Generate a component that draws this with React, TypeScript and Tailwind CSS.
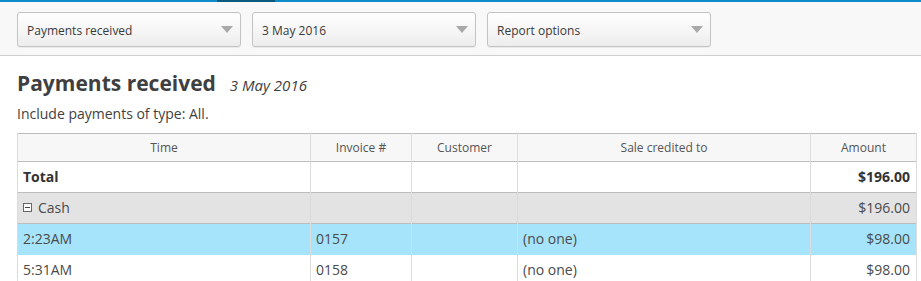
const cols = [
  { label: "Time", w: "w-[293px]" },
  { label: "Invoice #", w: "w-[101px]" },
  { label: "Customer", w: "w-[106px]" },
  { label: "Sale credited to", w: "w-[293px]" },
  { label: "Amount", w: "w-[106px]" },
]

const payments = [
  { time: "2:23AM", invoice: "0157", customer: "", credited: "(no one)", amount: "$98.00", selected: true },
  { time: "5:31AM", invoice: "0158", customer: "", credited: "(no one)", amount: "$98.00", selected: false },
]

function Select({ label }: { label: string }) {
  return (
    <div className="flex h-[35px] w-[224px] items-center justify-between rounded-[3px] border border-[#c4c4c4] bg-gradient-to-b from-white to-[#ededed] pl-[9px] pr-[7px] shadow-[0_1px_1px_rgba(0,0,0,0.06)]">
      <span className="pt-[2px] text-[12px] text-[#3a3a3a]">{label}</span>
      <svg width="12" height="7" viewBox="0 0 12 7">
        <polygon points="0,0 12,0 6,7" fill="#a9a9a9" />
      </svg>
    </div>
  )
}

export default function App() {
  const cell = "h-[31px] border-x border-[#dcdcdc] pl-[5px] pr-[6px] pb-[2px] text-[14px] text-[#4a4a4a]"

  return (
    <div className="min-h-[281px] bg-white font-['Open_Sans',sans-serif]">
      {/* top strip */}
      <div className="flex h-[2px] bg-[#0e8bc9]">
        <div className="ml-[217px] w-[58px] bg-[#0b5a7e]" />
      </div>

      {/* toolbar */}
      <div className="flex h-[54px] items-start gap-[11px] border-b border-[#cfcfcf] bg-[#f8f8f8] pl-[17px] pt-[10px]">
        <Select label="Payments received" />
        <Select label="3 May 2016" />
        <Select label="Report options" />
      </div>

      <div className="px-[17px]">
        <div className="mt-[12px] flex items-baseline gap-[14px]">
          <h1 className="text-[21px] leading-[30px] font-bold text-[#3f3f3f]">Payments received</h1>
          <span className="text-[15px] italic text-[#3f3f3f]">3 May 2016</span>
        </div>
        <p className="mt-[6px] text-[14px] leading-[20px] text-[#3f3f3f]">Include payments of type: All.</p>

        <table className="mt-[9px] w-[900px] table-fixed border-collapse border-t border-[#bdbdbd]">
          <colgroup>
            {cols.map(c => <col key={c.label} className={c.w} />)}
          </colgroup>
          <thead>
            <tr className="border-b border-[#bdbdbd] bg-[#f7f7f7]">
              {cols.map(c => (
                <th key={c.label} className="h-[28px] border-x border-[#dcdcdc] text-center text-[12px] font-normal text-[#555]">
                  {c.label}
                </th>
              ))}
            </tr>
          </thead>
          <tbody>
            <tr className="border-b border-[#bdbdbd] bg-white">
              <td className={cell + " font-bold text-[#333]"}>Total</td>
              <td className={cell} />
              <td className={cell} />
              <td className={cell} />
              <td className={cell + " text-right font-bold text-[#333]"}>$196.00</td>
            </tr>
            <tr className="border-b border-[#bdbdbd] bg-[#e3e3e3]">
              <td className={cell}>
                <span className="flex items-center gap-[6px]">
                  <span className="flex h-[9px] w-[9px] items-center justify-center border border-[#666] bg-white">
                    <span className="h-px w-[5px] bg-[#444]" />
                  </span>
                  Cash
                </span>
              </td>
              <td className={cell} />
              <td className={cell} />
              <td className={cell} />
              <td className={cell + " text-right"}>$196.00</td>
            </tr>
            {payments.map(p => (
              <tr key={p.invoice} className={p.selected ? "bg-[#a6e4fb]" : "bg-white"}>
                <td className={cell}>{p.time}</td>
                <td className={cell}>{p.invoice}</td>
                <td className={cell}>{p.customer}</td>
                <td className={cell}>{p.credited}</td>
                <td className={cell + " text-right"}>{p.amount}</td>
              </tr>
            ))}
          </tbody>
        </table>
      </div>
    </div>
  )
}
